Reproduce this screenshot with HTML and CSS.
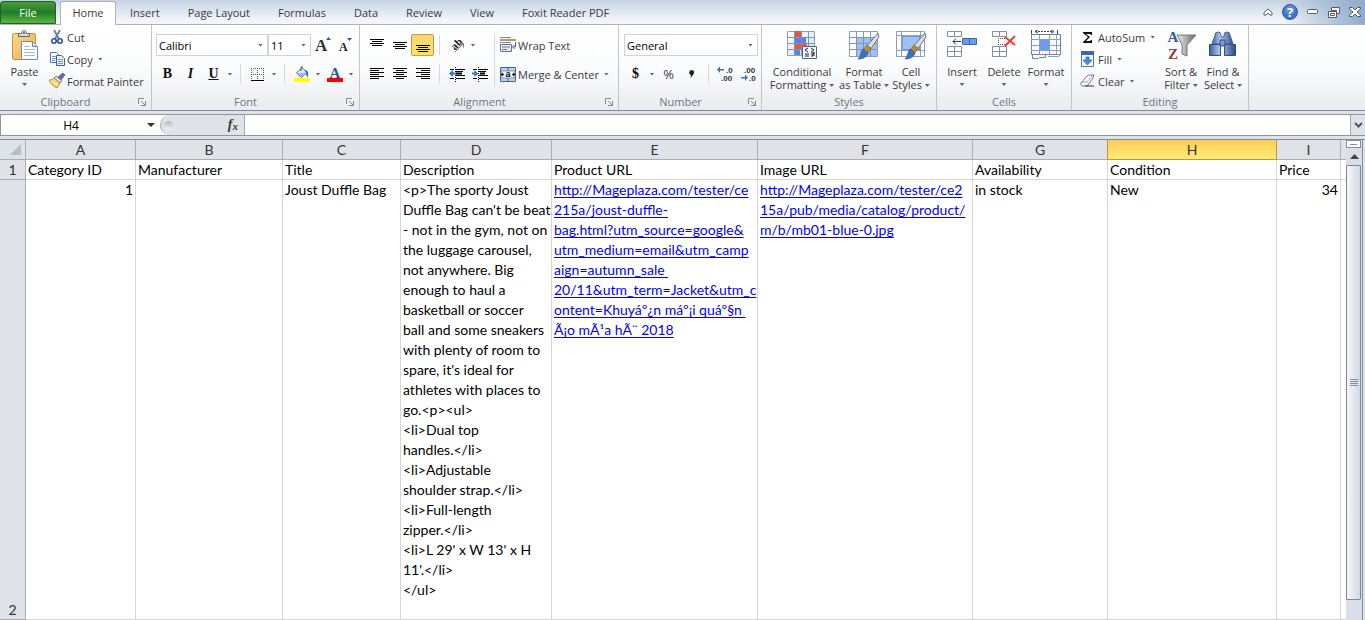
FILE: index.html
```html
<!DOCTYPE html>
<html lang="en">
<head>
  <meta charset="UTF-8">
  <meta name="viewport" content="width=device-width, initial-scale=1.0">
  <title>Product feed</title>
  <link rel="stylesheet" href="styles.css">
</head>
<body>
  <svg class="defs" width="0" height="0" aria-hidden="true">
    <defs>
      <linearGradient id="blue" x1="0" y1="0" x2="1" y2="0"><stop offset="0" stop-color="#3d5f9e"/><stop offset=".4" stop-color="#b4c9ec"/><stop offset="1" stop-color="#2d4b88"/></linearGradient>
      <linearGradient id="grey" x1="0" y1="0" x2="1" y2="0"><stop offset="0" stop-color="#eee"/><stop offset="1" stop-color="#666"/></linearGradient>
      <linearGradient id="cell" x1="0" y1="0" x2="1" y2="1"><stop offset="0" stop-color="#fff"/><stop offset="1" stop-color="#d3def0"/></linearGradient>
      <linearGradient id="board" x1="0" y1="0" x2="1" y2="1"><stop offset="0" stop-color="#fbd78e"/><stop offset="1" stop-color="#eab04c"/></linearGradient>
      <symbol id="brush" viewBox="0 0 22 28">
        <path d="M20 1l1 4-9 13-4-3z" fill="#ddd" stroke="#777"/>
        <path d="M9 13l4 3-3 5-5-3z" fill="#c18a3c" stroke="#7c5927" stroke-width=".6"/>
        <path d="M5 17l5 4c-1 4-5 6-10 6 3-2 2-7 5-10z" fill="#3f72bd" stroke="#234a8b" stroke-width=".6"/>
      </symbol>
    </defs>
  </svg>

  <nav class="tabs">
    <button class="file-tab">File</button>
    <button class="tab active">Home</button>
    <button class="tab">Insert</button>
    <button class="tab">Page Layout</button>
    <button class="tab">Formulas</button>
    <button class="tab">Data</button>
    <button class="tab">Review</button>
    <button class="tab">View</button>
    <button class="tab">Foxit Reader PDF</button>
    <div class="window-buttons">
      <button aria-label="Minimize ribbon"><svg width="10" height="8"><path d="M1 4.500L5 1l4 3.500v2.500H7L5 5.200 3 7H1z" fill="#fff" stroke="#555b66"/></svg></button>
      <button aria-label="Help"><svg width="16" height="16"><circle cx="8" cy="8" r="7.500" fill="#3f74c6" stroke="#2f5ca3"/><circle cx="8" cy="6" r="5" fill="#6b9ae0" opacity=".6"/><text x="8" y="12.500" text-anchor="middle" class="help-mark">?</text></svg></button>
      <button aria-label="Minimize"><svg width="12" height="6"><rect x=".5" y=".5" width="10" height="4" rx="1" fill="#fff" stroke="#555b66"/></svg></button>
      <button aria-label="Restore"><svg width="12" height="11"><path d="M3.500.5h8v6h-3v-3h-5z" fill="#fff" stroke="#555b66"/><path d="M.5 4.500h8v6h-8z" fill="#fff" stroke="#555b66"/><path d="M2.500 6.500h4v2h-4z" fill="#fff" stroke="#555b66"/></svg></button>
      <button aria-label="Close"><svg width="12" height="10"><path d="M.5.5h3L6 3l2.500-2.500h3V2L8 5l3.500 3v1.500h-3L6 7 3.500 9.500h-3V8L4 5 .5 2z" fill="#fff" stroke="#555b66"/></svg></button>
    </div>
  </nav>

  <div class="ribbon">
    <section class="group clipboard">
      <div class="body">
        <button class="big">
          <svg width="32" height="32"><rect x="3.500" y="3.500" width="23" height="26" rx="1.500" fill="url(#board)" stroke="#c9943f"/><path d="M9.500 6.500v-3h3c0-4 5-4 5 0h3v3z" fill="#d7dae0" stroke="#666"/><circle cx="15" cy="3" r="1" fill="#555"/><path d="M12.500 11.500h11l5 5v13h-16z" fill="#fbfdff" stroke="#6f89ae"/><path d="M23.500 11.500v5h5" fill="#cddcf0" stroke="#6f89ae"/><path d="M15 16.500h6M15 19.500h11M15 22.500h11M15 25.500h11" stroke="#a5bbdb"/></svg>
          <span>Paste</span><i class="caret"></i>
        </button>
        <div class="stack">
          <button class="small"><svg width="16" height="16"><path d="M5 1l5 9M11 1L6 10" stroke="#687f9f" stroke-width="1.800"/><circle cx="5" cy="12" r="2.200" fill="none" stroke="#28549d" stroke-width="1.600"/><circle cx="11" cy="12" r="2.200" fill="none" stroke="#28549d" stroke-width="1.600"/></svg>Cut</button>
          <button class="small"><svg width="16" height="16"><path d="M1.500 1.500h6l2 2v8h-8z" fill="#f7fbff" stroke="#5277b5"/><path d="M3 5.500h5M3 7.500h5M3 9.500h3" stroke="#6c9ad9"/><path d="M7.500 4.500h5l3 3v7h-8z" fill="#e9f2ff" stroke="#3a60a2"/><path d="M9 8.500h5M9 10.500h5M9 12.500h5" stroke="#6c9ad9"/></svg>Copy<i class="caret"></i></button>
          <button class="small"><svg width="16" height="16"><path d="M14 0l2 2-4 5-3-3z" fill="#6b6f9d" stroke="#45456e" stroke-width=".6"/><path d="M7 3l6 5-2 2-6-5z" fill="#e4e4e4" stroke="#555" stroke-width=".7"/><path d="M5 5l6 5-3 5C5 14 2 11 0 7c2 0 4-1 5-2z" fill="#f4d77a" stroke="#a27b2c" stroke-width=".8"/><path d="M4 9l4 3" stroke="#fff3bd"/></svg>Format Painter</button>
        </div>
      </div>
      <h2>Clipboard<svg class="launch" width="8" height="8"><path d="M.5 6V.5H6M3 3l4 4M7.500 3v4.500H3" fill="none" stroke="#888"/></svg></h2>
    </section>

    <section class="group font">
      <div class="rows">
        <div class="row">
          <label class="pick font-name"><select aria-label="Font"><option>Calibri</option></select><i class="caret"></i></label>
          <label class="pick font-size"><select aria-label="Font size"><option>11</option></select><i class="caret"></i></label>
          <button class="tool" aria-label="Grow font"><svg width="19" height="20"><text x="2" y="16" class="serif-17">A</text><path d="M13 5h5l-2.500-3z" fill="#2c58b0"/></svg></button>
          <button class="tool" aria-label="Shrink font"><svg width="17" height="20"><text x="2" y="16" class="serif-12">A</text><path d="M10 3h5l-2.500 3z" fill="#2c58b0"/></svg></button>
        </div>
        <div class="row">
          <button class="tool bold">B</button>
          <button class="tool italic">I</button>
          <button class="tool under">U</button>
          <button class="drop" aria-label="Underline styles"><i class="caret"></i></button>
          <i class="sep"></i>
          <button class="tool" aria-label="Borders"><svg width="13" height="13"><path d="M0 .5h13M0 6.500h13M.5 0v12M6.500 0v12M12.500 0v12" stroke="#555" stroke-dasharray="1 1"/><path d="M0 12.500h13" stroke="#000"/></svg></button>
          <button class="drop" aria-label="Border styles"><i class="caret"></i></button>
          <i class="sep"></i>
          <button class="tool" aria-label="Fill color"><svg width="16" height="16"><path d="M2.500 7L8 1.500l5 5-5.500 5z" fill="#dce8f8" stroke="#5b6c86"/><path d="M4 7h8l-4.500 4z" fill="#9db9e2"/><path d="M7 5V2q0-2 2-1" fill="none" stroke="#555"/><path d="M11 4q4 0 3 7-2-1-2-4z" fill="#2f60b8"/><path d="M0 12h16v4H0z" fill="#ff0"/></svg></button>
          <button class="drop" aria-label="Fill colors"><i class="caret"></i></button>
          <button class="tool" aria-label="Font color"><svg width="16" height="18"><text x="8" y="13" text-anchor="middle" class="serif-15">A</text><path d="M0 13h16v4H0z" fill="#f00"/></svg></button>
          <button class="drop" aria-label="Font colors"><i class="caret"></i></button>
        </div>
      </div>
      <h2>Font<svg class="launch" width="8" height="8"><path d="M.5 6V.5H6M3 3l4 4M7.500 3v4.500H3" fill="none" stroke="#888"/></svg></h2>
    </section>

    <section class="group alignment">
      <div class="body">
        <div class="rows">
          <div class="row">
            <button class="tool" aria-label="Top align"><svg width="14" height="14"><path d="M0 1.500h14M2 3.500h10M0 5.500h14M2 7.500h10" stroke="#000"/></svg></button>
            <button class="tool" aria-label="Middle align"><svg width="14" height="14"><path d="M0 4.500h14M2 6.500h10M0 8.500h14M2 10.500h10" stroke="#000"/></svg></button>
            <button class="tool pressed" aria-label="Bottom align"><svg width="14" height="14"><path d="M0 7.500h14M2 9.500h10M0 11.500h14M2 13.500h10" stroke="#000"/></svg></button>
            <i class="sep"></i>
            <button class="tool" aria-label="Orientation"><svg width="20" height="20"><text x="4" y="14" transform="rotate(-45 8 10)" class="orient">ab</text><path d="M8 17l8-8M12.500 8.500h4v4" fill="none" stroke="#777"/></svg></button>
            <button class="drop" aria-label="Orientation options"><i class="caret"></i></button>
          </div>
          <div class="row">
            <button class="tool" aria-label="Align left"><svg width="14" height="12"><path d="M0 .5h14M0 2.500h9M0 4.500h14M0 6.500h9M0 8.500h14M0 10.500h9" stroke="#000"/></svg></button>
            <button class="tool" aria-label="Center"><svg width="14" height="12"><path d="M0 .5h14M3 2.500h8M0 4.500h14M3 6.500h8M0 8.500h14M3 10.500h8" stroke="#000"/></svg></button>
            <button class="tool" aria-label="Align right"><svg width="14" height="12"><path d="M0 .5h14M5 2.500h9M0 4.500h14M5 6.500h9M0 8.500h14M5 10.500h9" stroke="#000"/></svg></button>
            <i class="sep"></i>
            <button class="tool" aria-label="Decrease indent"><svg width="16" height="15"><path d="M1 2.500h4M7 2.500h9M7 4.500h7M7 8.500h9M1 11.500h4M7 11.500h9" stroke="#000"/><path d="M7 6.500h6" stroke="#000" stroke-width="2"/><path d="M6.500 0v15" stroke="#000" stroke-dasharray="1 1"/><path d="M0 6.500L4 3v2.500h3v2H4V10z" fill="#3b6fc9"/></svg></button>
            <button class="tool" aria-label="Increase indent"><svg width="16" height="15"><path d="M1 2.500h4M7 2.500h9M7 4.500h7M7 8.500h9M1 11.500h4M7 11.500h9" stroke="#000"/><path d="M8 6.500h5" stroke="#000" stroke-width="2"/><path d="M6.500 0v15" stroke="#000" stroke-dasharray="1 1"/><path d="M6 6.500L2.500 3v2.500H0v2h2.500V10z" fill="#3b6fc9"/></svg></button>
          </div>
        </div>
        <i class="sep tall"></i>
        <div class="rows">
          <button class="small row"><svg width="16" height="16"><path d="M0 .5h11M0 5.500h11" stroke="#6b87b5"/><path d="M0 3h16" stroke="#ae6b2f" stroke-width="1.500"/><path d="M.5 7.500h11v7H.5z" fill="#e3ecf8" stroke="#5976a6"/><path d="M2 10h8M2 12.500h5" stroke="#ae6b2f"/><path d="M15.500 5v5h-2M14.500 8l-2 2 2 2" fill="none" stroke="#3a5f9e"/></svg>Wrap Text</button>
          <button class="small row"><svg width="16" height="15"><path d="M.5.500h15v14H.5z" fill="#bdd0ee" stroke="#46628f"/><path d="M8 0v15" stroke="#46628f"/><path d="M1 4h14v7H1z" fill="#f4f8ff" stroke="#46628f" stroke-width=".6"/><path d="M1 7.500h3M12 7.500h3M3 6L1 7.500 3 9M13 6l2 1.500L13 9" fill="none" stroke="#000"/><text x="8" y="10" text-anchor="middle" class="tiny">a</text></svg>Merge &amp; Center<i class="caret"></i></button>
        </div>
      </div>
      <h2>Alignment<svg class="launch" width="8" height="8"><path d="M.5 6V.5H6M3 3l4 4M7.500 3v4.500H3" fill="none" stroke="#888"/></svg></h2>
    </section>

    <section class="group number">
      <div class="rows">
        <div class="row">
          <label class="pick num-format"><select aria-label="Number format"><option>General</option></select><i class="caret"></i></label>
        </div>
        <div class="row">
          <button class="tool bold">$</button>
          <button class="drop" aria-label="Currencies"><i class="caret"></i></button>
          <button class="tool percent">%</button>
          <button class="tool" aria-label="Comma style"><svg width="6" height="8"><path d="M3 0c3 0 3 5-2 8 1-2 1-3 1-3C-1 4 0 0 3 0z" fill="#222"/></svg></button>
          <i class="sep"></i>
          <button class="tool" aria-label="Increase decimal"><svg width="18" height="16"><text x="9" y="7" class="digits">.0</text><text x="4" y="15" class="digits">.00</text><path d="M0 3.500l3-3V3h4v1.500H3V7z" fill="#3b6fc9"/></svg></button>
          <button class="tool" aria-label="Decrease decimal"><svg width="18" height="16"><text x="4" y="7" class="digits">.00</text><text x="9" y="15" class="digits">.0</text><path d="M8 11.500l-3-3V11H1v1.500h4V15z" fill="#3b6fc9"/></svg></button>
        </div>
      </div>
      <h2>Number<svg class="launch" width="8" height="8"><path d="M.5 6V.5H6M3 3l4 4M7.500 3v4.500H3" fill="none" stroke="#888"/></svg></h2>
    </section>

    <section class="group styles">
      <div class="body">
        <button class="big wide">
          <svg width="32" height="32"><path d="M1.500 1.500h27v24h-27z" fill="url(#cell)" stroke="#8aa0c2"/><path d="M8 1h7v6H8zM8 13h13v6H8z" fill="#f0513a"/><path d="M8 7h12v6H8zM8 19h6v6H8z" fill="#5585e0"/><path d="M1 7.500h28M1 13.500h28M1 19.500h28M8.500 1v24M15.500 1v24M22.500 1v24" stroke="#7d93b8"/><path d="M16.500 16.500h14v12h-14z" fill="#f2f6fd" stroke="#4c6894"/><path d="M22 18l-3 2 3 2M19 24h4M19 26h4M25 18l3 2-3 2M25 23h4M25 25h4M28 22l-2 5" fill="none" stroke="#222"/></svg>
          <span>Conditional<br>Formatting <i class="caret"></i></span>
        </button>
        <button class="big">
          <svg width="32" height="32"><path d="M1.500 1.500h28v25h-28z" fill="#fff" stroke="#8aa0c2"/><path d="M8 7h21v19H8z" fill="#9fc0f3"/><path d="M1 7.500h28M1 13.500h28M1 19.500h28M8.500 1v25M15.500 1v25M22.500 1v25" stroke="#7d93b8"/><use href="#brush" x="10" y="2" width="22" height="28"/></svg>
          <span>Format<br>as Table <i class="caret"></i></span>
        </button>
        <button class="big narrow">
          <svg width="32" height="32"><path d="M1.500 1.500h28v25h-28z" fill="#fff" stroke="#8aa0c2"/><path d="M7 6h18v14H7z" fill="#9fc0f3" stroke="#4a79cb"/><path d="M1 5.500h28M1 20.500h28M6.500 1v25M25.500 1v25" stroke="#8aa0c2"/><use href="#brush" x="10" y="2" width="22" height="28"/></svg>
          <span>Cell<br>Styles <i class="caret"></i></span>
        </button>
      </div>
      <h2>Styles</h2>
    </section>

    <section class="group cells">
      <div class="body">
        <button class="big narrow">
          <svg width="32" height="32"><path d="M1.500 1.500h14v5h-14zM1.500 16.500h14v10h-14zM8.500 1v5M8.500 16v10M1 21.500h14" fill="#fff" stroke="#8290a8"/><path d="M16.500 8.500h14v6h-14z" fill="#6c9bea" stroke="#3765b3"/><path d="M23.500 8v6" stroke="#3765b3"/><path d="M7 11.500h8M10 8.500l-3 3 3 3" fill="none" stroke="#333"/></svg>
          <span>Insert</span><i class="caret"></i>
        </button>
        <button class="big narrow">
          <svg width="32" height="32"><path d="M4.500 1.500h14v5h-14zM4.500 16.500h14v10h-14zM11.500 1v5M11.500 16v10M4 21.500h14" fill="#fff" stroke="#8290a8"/><path d="M10 8.500h8M10 14.500h8M10.500 8v7" stroke="#555" stroke-dasharray="1 1"/><path d="M17 7l10 8M27 6L17 16" stroke="#ee4126" stroke-width="2"/></svg>
          <span>Delete</span><i class="caret"></i>
        </button>
        <button class="big narrow">
          <svg width="32" height="32"><path d="M1.500 0v4M27.500 0v4M8 0L5 1.500 8 3M21 0l3 1.500L21 3" fill="none" stroke="#444"/><path d="M5 1.500h19" stroke="#444" stroke-dasharray="2 1"/><path d="M1.500 4.500h29v20h-29z" fill="#f8faff" stroke="#6d81a6"/><path d="M10 10h9v11h-9z" fill="#6c9bea"/><path d="M1 9.500h29M1 15.500h29M1 20.500h29M9.500 5v19M19.500 5v19M26.500 5v19" stroke="#8fa0bf"/><path d="M10 10h9v10h-9z" fill="#6c9bea"/><path d="M2.500 24.500h13v3h-6l-1 1h-6z" fill="#fff" stroke="#6d81a6"/><path d="M18 26.500h11l2-3" fill="none" stroke="#8fa0bf"/></svg>
          <span>Format</span><i class="caret"></i>
        </button>
      </div>
      <h2>Cells</h2>
    </section>

    <section class="group editing">
      <div class="body">
        <div class="stack">
          <button class="small"><svg width="16" height="16"><path d="M12 6V3H3v1l5 4-5 5v1h9v-3h-1l-1 1H6l4-4-4-3h4l1 1z" fill="#111"/></svg>AutoSum<i class="caret"></i></button>
          <button class="small"><svg width="16" height="16"><path d="M1.500.5h12v15h-12z" fill="#f4f8ff" stroke="#5272ad"/><path d="M1 0h13v4H1z" fill="#3d64ac"/><path d="M6 6h3v3h3l-4.500 5L3 9h3z" fill="#4e88e2" stroke="#2a59a8" stroke-width=".7"/></svg>Fill<i class="caret"></i></button>
          <button class="small"><svg width="16" height="16"><path d="M1 10l6-7q1-1 3-1h4l-1 3-5 7q-1 1-2 1H2q-2-1-1-3z" fill="#f8faff" stroke="#6c7c98"/><path d="M2 9h5l6-7" fill="none" stroke="#9aa8bf"/><path d="M5 13h9" stroke="#333"/></svg>Clear<i class="caret"></i></button>
        </div>
        <button class="big narrow">
          <svg width="32" height="32"><path d="M12 5h19l-9 10v11l-5-2v-9z" fill="url(#grey)" stroke="#777"/><text x="8" y="12" text-anchor="middle" class="sort-a">A</text><text x="8" y="29" text-anchor="middle" class="sort-z">Z</text></svg>
          <span>Sort &amp;<br>Filter <i class="caret"></i></span>
        </button>
        <button class="big narrow">
          <svg width="32" height="32"><path d="M8 5q0-3 3-3t3 3v2h3V5q0-3 3-3t3 3l3 9H5z" fill="url(#blue)" stroke="#43639f"/><path d="M2.500 14.500h11v11h-11zM17.500 14.500h11v11h-11z" fill="url(#blue)" stroke="#2e4d87"/><path d="M13 10h5v6h-5z" fill="#7c9acd" stroke="#2e4d87"/></svg>
          <span>Find &amp;<br>Select <i class="caret"></i></span>
        </button>
      </div>
      <h2>Editing</h2>
    </section>
  </div>

  <div class="formula-bar">
    <label class="name-box"><input type="text" value="H4" aria-label="Name box"><i class="caret dark"></i></label>
    <div class="fx"><i class="knob"></i><button aria-label="Insert function"><em>f</em><sub>x</sub></button></div>
    <input class="formula" type="text" aria-label="Formula">
    <button class="expand" aria-label="Expand formula bar"><svg width="9" height="6"><path d="M1 1l3.500 3.500L8 1" fill="none" stroke="#555" stroke-width="2"/></svg></button>
  </div>

  <div class="sheet">
    <div class="grid">
      <table>
        <colgroup>
          <col class="c-row"><col class="c-a"><col class="c-b"><col class="c-c"><col class="c-d"><col class="c-e"><col class="c-f"><col class="c-g"><col class="c-h"><col class="c-i"><col>
        </colgroup>
        <thead>
          <tr><th class="corner"><svg width="11" height="11"><path d="M11 0v11H0z" fill="#b7bec7"/></svg></th><th>A</th><th>B</th><th>C</th><th>D</th><th>E</th><th>F</th><th>G</th><th class="selected">H</th><th>I</th><th></th></tr>
        </thead>
        <tbody>
          <tr><th>1</th><td>Category ID</td><td>Manufacturer</td><td>Title</td><td>Description</td><td>Product URL</td><td>Image URL</td><td>Availability</td><td>Condition</td><td>Price</td><td></td></tr>
          <tr class="product">
            <th>2</th>
            <td class="num">1</td>
            <td></td>
            <td>Joust Duffle Bag</td>
            <td>&lt;p&gt;The sporty Joust<br>Duffle Bag can't be beat<br>- not in the gym, not on<br>the luggage carousel,<br>not anywhere. Big<br>enough to haul a<br>basketball or soccer<br>ball and some sneakers<br>with plenty of room to<br>spare, it's ideal for<br>athletes with places to<br>go.&lt;p&gt;&lt;ul&gt;<br>&lt;li&gt;Dual top<br>handles.&lt;/li&gt;<br>&lt;li&gt;Adjustable<br>shoulder strap.&lt;/li&gt;<br>&lt;li&gt;Full-length<br>zipper.&lt;/li&gt;<br>&lt;li&gt;L 29' x W 13' x H<br>11'.&lt;/li&gt;<br>&lt;/ul&gt;</td>
            <td><a href="#">http://Mageplaza.com/tester/ce<br>215a/joust-duffle-<br>bag.html?utm_source=google&amp;<br>utm_medium=email&amp;utm_camp<br>aign=autumn_sale&nbsp;<br>20/11&amp;utm_term=Jacket&amp;utm_c<br>ontent=Khuyáº¿n máº¡i quáº§n&nbsp;<br>Ã¡o mÃ¹a hÃ¨ 2018</a></td>
            <td><a href="#">http://Mageplaza.com/tester/ce2<br>15a/pub/media/catalog/product/<br>m/b/mb01-blue-0.jpg</a></td>
            <td>in stock</td>
            <td>New</td>
            <td class="num">34</td>
            <td></td>
          </tr>
        </tbody>
      </table>
    </div>
    <div class="scrollbar">
      <div class="split"></div>
      <button class="up" aria-label="Scroll up"><svg width="9" height="5"><path d="M0 5h9L4.500 0z" fill="#444"/></svg></button>
      <div class="thumb"><svg width="8" height="7"><path d="M0 .5h8M0 2.500h8M0 4.500h8M0 6.500h8" stroke="#858d98"/></svg></div>
    </div>
  </div>
</body>
</html>
```
FILE: styles.css
```css
* {
  margin: 0;
  padding: 0;
  box-sizing: border-box;
}
html, body {
  height: 100%;
}
body {
  display: flex;
  flex-direction: column;
  overflow: hidden;
  font-family: 'Open Sans', 'Noto Sans', sans-serif;
  font-size: 11px;
  color: #3b3b3b;
  background: #dfe2e8;
}
button, input, select {
  font: inherit;
  color: inherit;
  border: none;
  background: none;
  outline: none;
}
button {
  white-space: nowrap;
}
svg {
  display: block;
  flex: none;
}
.defs {
  position: absolute;
}

/* tabs */
.tabs {
  display: flex;
  flex: none;
  align-items: flex-end;
  height: 25px;
  border-bottom: 1px solid #aeb3bb;
  background: linear-gradient(90deg, rgba(121, 150, 192, 0) 94%, #8fa9cd), linear-gradient(#c5d2e4, #f3f5f9 85%);
}
.file-tab {
  width: 56px;
  height: 23px;
  margin-right: 4px;
  border: 1px solid #1d6321;
  border-radius: 3px 3px 0 0;
  color: #fff;
  background: linear-gradient(#4a9b3d, #1f7d26 50%, #5db547);
}
.tab {
  height: 24px;
  padding: 0 14px;
}
.tab.active {
  width: 56px;
  height: 24px;
  margin: 0 0 -1px;
  padding: 0 0 2px;
  border: 1px solid #aeb3bb;
  border-bottom: none;
  border-radius: 3px 3px 0 0;
  background: #fff;
}
.window-buttons {
  display: flex;
  gap: 9px;
  align-items: center;
  height: 24px;
  margin-left: auto;
  padding-right: 4px;
}
.help-mark {
  font: bold 13px 'Open Sans', sans-serif;
  fill: #fff;
}

/* ribbon */
.ribbon {
  display: flex;
  flex: none;
  height: 86px;
  border-bottom: 1px solid #868b93;
  background: linear-gradient(#fff, #fbfcfd 50%, #e9ecf0);
}
.group {
  display: flex;
  flex: none;
  flex-direction: column;
  justify-content: space-between;
  border-right: 1px solid #c0c4cb;
  padding-left: 4px;
}
.clipboard { width: 152px; }
.font { width: 208px; }
.alignment { width: 259px; padding-left: 5px; }
.number { width: 143px; padding-left: 5px; }
.styles { width: 175px; }
.cells { width: 135px; }
.editing { width: 177px; }
.group h2 {
  position: relative;
  display: flex;
  align-items: center;
  justify-content: center;
  height: 17px;
  margin-left: -24px;
  font-size: 11px;
  font-weight: normal;
  color: #6f7580;
}
.styles h2, .cells h2, .editing h2 {
  margin-left: -4px;
}
.launch {
  position: absolute;
  right: 5px;
  top: 5px;
}
.body {
  display: flex;
}
.stack {
  padding-top: 1px;
}
.small {
  display: flex;
  gap: 2px;
  align-items: center;
  height: 22px;
}
.stack .small {
  padding-left: 4px;
}
.small .caret {
  margin-left: 3px;
}
.big {
  display: flex;
  flex-direction: column;
  align-items: center;
  width: 52px;
  padding-top: 5px;
  line-height: 13px;
}
.big span {
  padding-top: 3px;
}
.big .caret {
  margin-top: 5px;
}
.big span .caret {
  margin: 0 0 2px;
}
.clipboard .big {
  width: 41px;
}
.big.wide {
  width: 72px;
}
.big.narrow {
  width: 42px;
}
.editing .stack {
  width: 84px;
}
.caret {
  display: inline-block;
  width: 5px;
  height: 3px;
  background: #666;
  clip-path: polygon(0 0, 100% 0, 50% 100%);
}
.rows {
  display: flex;
  flex-direction: column;
  gap: 7px;
  padding-top: 9px;
}
.row {
  display: flex;
  align-items: center;
  height: 22px;
}
.tool {
  display: flex;
  align-items: center;
  justify-content: center;
  width: 23px;
  height: 22px;
}
.pressed {
  border: 1px solid #c29a3f;
  border-radius: 2px;
  background: linear-gradient(#fcd472, #ffe06c);
}
.drop {
  display: flex;
  align-items: center;
  justify-content: center;
  width: 10px;
  height: 22px;
}
.sep {
  width: 1px;
  height: 20px;
  margin: 0 5px;
  background: #d5d8dd;
}
.sep.tall {
  height: 54px;
  margin: 8px 5px 0 3px;
}
.pick {
  display: flex;
  align-items: center;
  height: 22px;
  padding-right: 4px;
  border: 1px solid #d0d3d8;
  background: #fff;
  color: #000;
}
.pick select {
  flex: 1;
  min-width: 0;
  padding-left: 2px;
  appearance: none;
}
.font-name { width: 112px; }
.font-size { width: 43px; }
.num-format { width: 134px; }
.bold, .italic, .under {
  font-family: 'Liberation Serif', serif;
  font-size: 14px;
  font-weight: bold;
  color: #111;
}
.italic {
  font-style: italic;
}
.under {
  text-decoration: underline;
}
.percent {
  font-size: 13px;
}
.serif-17 {
  font: bold 17px 'Liberation Serif', serif;
  fill: #333;
}
.serif-12 {
  font: bold 12px 'Liberation Serif', serif;
  fill: #222;
}
.serif-15 {
  font: bold 15px 'Liberation Serif', serif;
  fill: #2f549b;
}
.orient {
  font: bold 11px 'Liberation Serif', serif;
  fill: #222;
}
.tiny {
  font: bold 9px 'Liberation Sans', sans-serif;
}
.digits {
  font: bold 8px 'Liberation Sans', sans-serif;
  fill: #333;
}
.sort-a, .sort-z {
  font: bold 15px 'Liberation Serif', serif;
  fill: #34599f;
}
.sort-z {
  fill: #9a3535;
}

/* formula bar */
.formula-bar {
  display: flex;
  flex: none;
  height: 22px;
  margin: 3px 0;
  border: 1px solid #8f949d;
  border-right: none;
  background: #fff;
}
.name-box {
  display: flex;
  align-items: center;
  width: 159px;
  padding-right: 5px;
  font-size: 12px;
  color: #000;
}
.name-box input {
  flex: 1;
  min-width: 0;
  padding-right: 6px;
  text-align: center;
}
.caret.dark {
  width: 8px;
  height: 4px;
  background: #333;
}
.fx {
  display: flex;
  align-items: center;
  justify-content: space-between;
  width: 85px;
  padding: 0 6px 0 3px;
  border: 1px solid #a5a9b0;
  border-width: 0 1px;
  border-radius: 10px 0 0 10px;
  background: #dfe2e7;
}
.fx button {
  font: bold 14px 'Liberation Serif', serif;
  font-style: italic;
  line-height: 18px;
}
.fx sub {
  font-size: 11px;
  vertical-align: -1px;
}
.knob {
  width: 9px;
  height: 9px;
  border-radius: 50%;
  background: linear-gradient(#b5b8bd, #f3f4f6);
}
.formula {
  flex: 1;
  padding: 0 4px;
}
.expand {
  display: flex;
  align-items: center;
  justify-content: center;
  width: 15px;
  border-left: 1px solid #a5a9b0;
  background: #dfe2e7;
}

/* worksheet */
.sheet {
  display: flex;
  flex: 1;
  min-height: 0;
  border-top: 1px solid #858a93;
}
.grid {
  flex: 1;
  min-width: 0;
  overflow: hidden;
  background: #fff;
}
table {
  width: 100%;
  table-layout: fixed;
  border-spacing: 0;
  font-family: Lato, 'Open Sans', sans-serif;
  font-size: 14px;
  line-height: 19px;
  color: #000;
}
.c-row { width: 26px; }
.c-a { width: 110px; }
.c-b { width: 147px; }
.c-c { width: 118px; }
.c-d { width: 151px; }
.c-e { width: 206px; }
.c-f { width: 215px; }
.c-g { width: 135px; }
.c-h { width: 169px; }
.c-i { width: 64px; }
th {
  height: 20px;
  border: 1px solid #a9aeb6;
  border-width: 0 1px 1px 0;
  font-weight: normal;
  color: #333;
  background: #dfe2e7;
}
.corner svg {
  margin-left: 10px;
}
.selected {
  border-color: #c2933a;
  box-shadow: -1px 0 0 #c2933a;
  background: linear-gradient(#fdcd59, #ffec75);
}
td {
  height: 20px;
  padding: 0 2px;
  border: 1px solid #d6d7d9;
  border-width: 0 1px 1px 0;
  white-space: nowrap;
}
td:last-child, th:last-child {
  padding: 0;
  border-right: none;
}
.product td {
  height: 440px;
  line-height: 20px;
  vertical-align: top;
}
.product th {
  vertical-align: bottom;
}
.num {
  text-align: right;
}
a {
  color: #00f;
  text-decoration-skip-ink: none;
  text-underline-offset: 2px;
}
.scrollbar {
  display: flex;
  flex-direction: column;
  width: 19px;
  border-right: 2px solid #dfe2e8;
  background: #d9dee8;
  box-shadow: inset -1px 0 0 #858a93;
}
.split {
  height: 8px;
  margin-right: 2px;
  border: 1px solid #8a8f98;
  background: linear-gradient(#8a8f98, #8a8f98) center / 7px 1px no-repeat, #fff;
}
.up {
  display: flex;
  align-items: center;
  justify-content: center;
  height: 17px;
}
.thumb {
  display: flex;
  align-items: center;
  justify-content: center;
  flex: 1;
  margin: 0 2px 20px 0;
  border: 1px solid #7f8894;
  border-radius: 1px;
  background: linear-gradient(90deg, #f5f8fa, #d4d9e0);
}
```
